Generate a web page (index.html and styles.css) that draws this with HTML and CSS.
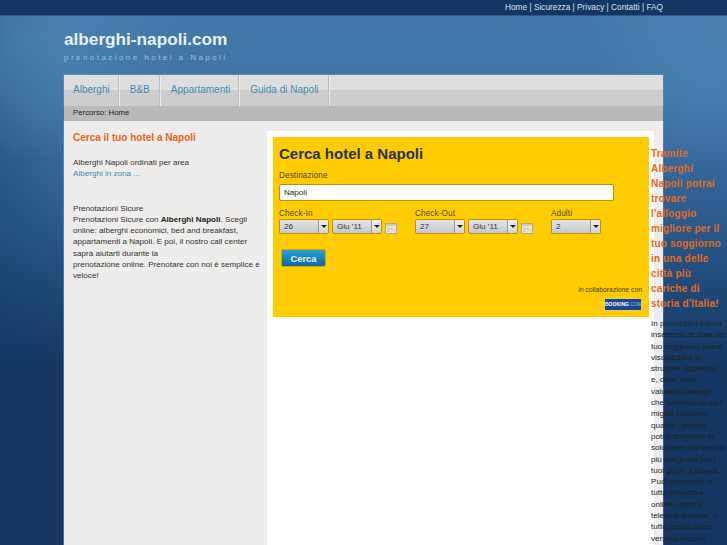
FILE: index.html
```html
<!DOCTYPE html>
<html lang="it">
<head>
<meta charset="utf-8">
<title>alberghi-napoli.com</title>
<link rel="stylesheet" href="styles.css">
</head>
<body>
<div class="page">
  <div class="topbar">
    <div class="toplinks">Home | Sicurezza | Privacy | Contatti | FAQ</div>
  </div>
  <div class="wrap">
    <header class="brand">
      <h1>alberghi-napoli.com</h1>
      <p>prenotazione hotel a Napoli</p>
    </header>
    <nav class="tabs">
      <a class="tab">Alberghi</a>
      <a class="tab">B&amp;B</a>
      <a class="tab">Appartamenti</a>
      <a class="tab">Guida di Napoli</a>
    </nav>
    <div class="crumb">Percorso: Home</div>
    <div class="body">
      <aside class="left">
        <h2>Cerca il tuo hotel a Napoli</h2>
        <p class="area">Alberghi Napoli ordinati per area<br><a>Alberghi in zona ...</a></p>
        <p>Prenotazioni Sicure<br>Prenotazioni Sicure con <b>Alberghi Napoli</b>. Scegli online: alberghi economici, bed and breakfast, appartamenti a Napoli. E poi, il nostro call center saprà aiutarti durante la<br>prenotazione online. Prenotare con noi è semplice e veloce!</p>
      </aside>
      <main class="center">
        <section class="search">
          <h3>Cerca hotel a Napoli</h3>
          <label class="lbl">Destinazione</label>
          <div class="dest">Napoli</div>
          <div class="dates">
            <div class="group g1">
              <label class="lbl">Check-In</label>
              <div class="row">
                <div class="sel"><span>26</span><i></i></div>
                <div class="sel"><span>Giu '11</span><i></i></div>
                <svg class="cal" width="12" height="11" viewBox="0 0 12 11"><rect x=".5" y=".5" width="11" height="10" fill="#e9e6d8" stroke="#a9a9a0"/><rect x="1" y="1" width="10" height="2" fill="#c9c9c4"/><path d="M2.5 5h2v1.5h-2zM5.5 5h2v1.5h-2zM8 7h1.5v1.5H8zM2.5 7.5h2V9h-2z" fill="#dcb98a"/></svg>
              </div>
            </div>
            <div class="group g2">
              <label class="lbl">Check-Out</label>
              <div class="row">
                <div class="sel"><span>27</span><i></i></div>
                <div class="sel"><span>Giu '11</span><i></i></div>
                <svg class="cal" width="12" height="11" viewBox="0 0 12 11"><rect x=".5" y=".5" width="11" height="10" fill="#e9e6d8" stroke="#a9a9a0"/><rect x="1" y="1" width="10" height="2" fill="#c9c9c4"/><path d="M2.5 5h2v1.5h-2zM5.5 5h2v1.5h-2zM8 7h1.5v1.5H8zM2.5 7.5h2V9h-2z" fill="#dcb98a"/></svg>
              </div>
            </div>
            <div class="group">
              <label class="lbl">Adulti</label>
              <div class="row"><div class="sel"><span>2</span><i></i></div></div>
            </div>
          </div>
          <button class="go" type="button">Cerca</button>
          <div class="collab">
            <span>in collaborazione con</span>
            <div class="logo"><b>BOOKING</b>.COM</div>
          </div>
        </section>
      </main>
      <aside class="right">
        <h4>Tramite Alberghi Napoli potrai trovare l'alloggio migliore per il tuo soggiorno in una delle città più cariche di storia d'Italia!</h4>
        <p>In pochissimi minuti<br>inserendo le date del<br>tuo soggiorno potrai<br>visualizzare le<br>strutture disponibil<br>e, dopo aver<br>valutato l'albergo<br>che secondo te ha il<br>miglior rapporto<br>qualità / prezzo<br>potrai scegliere la<br>soluzione che riterrai<br>più adeguata per i<br>tuoi giorni a Napoli.<br>Puoi prenotare in<br>tutta sicurezza<br>online, oppure<br>telefonicamente. Il<br>tutto senza dover<br>versare nessun</p>
      </aside>
    </div>
  </div>
</div>
</body>
</html>
```
FILE: styles.css
```css
html, body { margin: 0; padding: 0; height: 100%; overflow: hidden; }
body {
  font-family: "Liberation Sans", Arial, sans-serif;
  font-size: 8.1px;
  line-height: 11.3px;
  color: #333;
  background-color: #133662;
}
.page {
  height: 545px;
  overflow: hidden;
  background-color: #133662;
  background-image:
    radial-gradient(ellipse 150px 120px at 30px 40px, rgba(78,138,182,.55), rgba(78,138,182,0)),
    radial-gradient(ellipse 120px 130px at 710px 40px, rgba(78,138,182,.6), rgba(78,138,182,0)),
    linear-gradient(90deg, rgba(19,54,98,.3) 0, rgba(19,54,98,0) 64px),
    linear-gradient(180deg, #4279a8 16px, #3f75a5 100px, #2f5f90 205px, #1d4674 300px, #133662 370px);
}
.topbar {
  height: 15px;
  background: #133662;
  border-bottom: 1px solid #2f5a8a;
  display: flex;
  justify-content: flex-end;
  padding-right: 64px;
}
.toplinks { color: #d9e2ec; font-size: 8.3px; line-height: 14px; }
.wrap { width: 599px; margin-left: 64px; position: relative; }
.brand { height: 59px; box-sizing: border-box; padding-top: 13px; }
.brand h1 {
  margin: 0;
  font-size: 17.2px;
  line-height: 20px;
  font-weight: bold;
  color: #e8f0f6;
}
.brand p {
  margin: 4px 0 0;
  font-size: 8px;
  line-height: 10px;
  letter-spacing: 2.45px;
  color: #a3bfd6;
}
.tabs {
  display: flex;
  height: 31px;
  background: linear-gradient(180deg, #dededc 0, #dededc 15px, #d2d2d2 15px, #cdcdcd 16px, #cdcdcd 100%);
  box-shadow: 0 0 0 1px rgba(120,160,195,.35);
}
.tab {
  color: #3b8fb0;
  font-size: 10px;
  line-height: 30px;
  padding: 0 9px 0 10px;
  border-right: 1px solid #bcbcbc;
  box-shadow: 1px 0 0 #ececec;
  margin-right: 1px;
}
.tab:first-child { padding: 0 8px 0 9px; }
.tab:nth-child(3) { padding-right: 8px; }
.crumb {
  height: 15px;
  padding-left: 9px;
  background: #b9b9b9;
  color: #222;
  font-size: 7.8px;
  line-height: 14px;
}
.body {
  display: flex;
  height: 424px;
  background: #eeedeb;
  box-shadow: 1px 0 0 rgba(120,160,195,.35), -1px 0 0 rgba(120,160,195,.5);
}
.left { width: 190px; padding: 10px 4px 0 9px; flex: none; }
.left h2 {
  margin: 0 0 13px;
  font-size: 10px;
  line-height: 13px;
  font-weight: bold;
  color: #e8641b;
}
.left p { margin: 0; }
.left .area { margin-bottom: 23px; }
.left a { color: #3b8fb0; }
.left b { color: #222; }
.center {
  width: 387px;
  flex: none;
  margin-top: 10px;
  background: #fff;
  padding: 6px 0 0 6px;
  box-sizing: border-box;
}
.search {
  width: 376px;
  height: 180px;
  box-sizing: border-box;
  padding: 8px 6px 0;
  background: #fc0;
  position: relative;
}
.search h3 {
  margin: 0 0 8px;
  font-size: 15px;
  line-height: 17px;
  font-weight: bold;
  color: #26323c;
}
.lbl { display: block; color: #4f4a1c; font-size: 8.2px; letter-spacing: .1px; line-height: 11px; }
.dest {
  width: 329px;
  height: 15px;
  margin-top: 3px;
  padding-left: 4px;
  background: #fff;
  border: 1px solid #b8950f;
  border-radius: 2px;
  line-height: 15px;
  color: #222;
}
.dates { display: flex; margin-top: 7px; }
.group { flex: none; }
.g1 { width: 136px; }
.g2 { width: 136px; }
.row { display: flex; align-items: flex-start; gap: 3px; margin-top: 0; }
.sel {
  box-sizing: border-box;
  width: 50px;
  height: 15px;
  display: flex;
  border: 1px solid #b8950f;
  border-radius: 2px;
  background: linear-gradient(180deg, #e4e4e6, #c6c8ce);
  color: #333;
  line-height: 14px;
}
.sel span { flex: 1; padding-left: 4px; }
.sel i {
  width: 9px;
  border-left: 1px solid #9a9a9a;
  background: linear-gradient(180deg, #f0f0f0, #d4d4d6);
  position: relative;
}
.sel i::after {
  content: "";
  position: absolute;
  left: 2px;
  top: 5px;
  border: 3px solid transparent;
  border-top: 3px solid #222;
  border-bottom: 0;
}
.cal { margin: 4px 0 0 0; }
.go {
  display: block;
  margin: 15px 0 0 2px;
  width: 45px;
  height: 18px;
  border: 1px solid #d3a900;
  border-radius: 2px;
  padding: 0;
  background: linear-gradient(180deg, #2aa0d4, #0f6aa0);
  color: #eaf4fa;
  font-family: inherit;
  font-size: 9.4px;
  font-weight: bold;
  line-height: 15px;
}
.collab {
  position: absolute;
  right: 7px;
  bottom: 6px;
  text-align: right;
  color: #453f12;
  font-size: 6.8px;
  line-height: 9px;
}
.collab span { display: block; margin-bottom: 4px; }
.logo {
  display: block;
  margin-left: auto;
  width: 38px;
  height: 13px;
  box-sizing: border-box;
  background: #1c4593;
  border: 1px solid #e7c96a;
  color: #8fc4e8;
  font-size: 5px;
  line-height: 11px;
  text-align: center;
  white-space: nowrap;
  overflow: hidden;
}
.logo b { color: #fff; }
.right {
  width: 75px;
  flex: none;
  margin-left: -3px;
  padding-top: 25px;
}
.right h4 {
  width: 72px;
  margin: 0 0 7px;
  font-size: 10px;
  line-height: 15px;
  font-weight: bold;
  letter-spacing: .2px;
  color: #e06a1e;
}
.right p { margin: 0; color: #222; white-space: nowrap; }
```
